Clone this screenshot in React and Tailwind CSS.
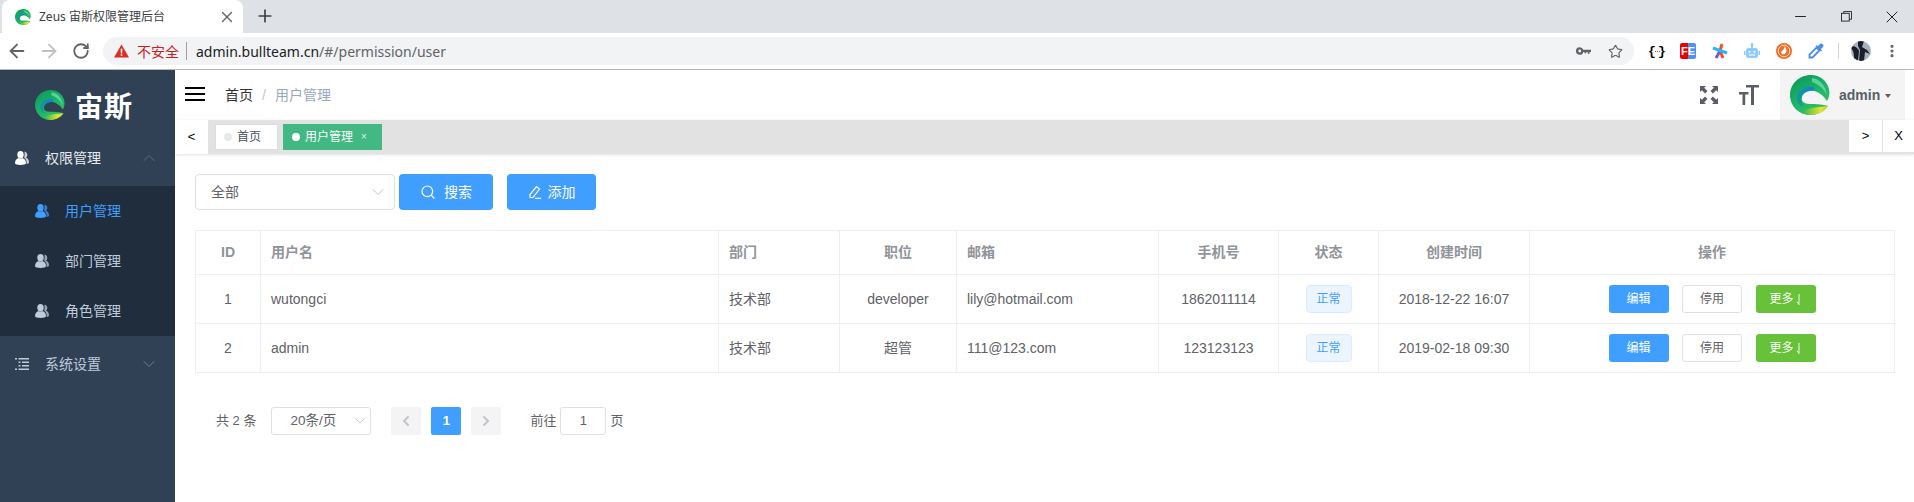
import { ArrowLeft, ArrowRight, RotateCw, Star, Search, ChevronDown, ChevronUp, ChevronLeft, ChevronRight, Plus, X, Minus, EllipsisVertical } from "lucide-react";

const cjk = "font-['Liberation_Sans','Noto_Sans_CJK_SC',sans-serif]";

function Logo({ size, id }) {
  return (
    <svg width={size} height={size} viewBox="0 0 40 40" className="shrink-0">
      <defs>
        <linearGradient id={id + "g"} x1="0.2" y1="0" x2="0.8" y2="1">
          <stop offset="0" stopColor="#0c9a5a" />
          <stop offset="0.55" stopColor="#1fb66b" />
          <stop offset="1" stopColor="#3cc25a" />
        </linearGradient>
        <linearGradient id={id + "y"} x1="0" y1="0" x2="1" y2="0">
          <stop offset="0" stopColor="#35b84f" />
          <stop offset="0.7" stopColor="#e6e22e" />
          <stop offset="1" stopColor="#b7dc3a" />
        </linearGradient>
        <linearGradient id={id + "b"} x1="0" y1="1" x2="1" y2="0">
          <stop offset="0" stopColor="#0f9d8a" />
          <stop offset="1" stopColor="#1a7fd6" />
        </linearGradient>
      </defs>
      <path d="M21 0C30 0 37 6 39 14C40 19 39 23 37 26C34 21 29 17 24 16C16 15 11 20 12 25C13 29 18 29 24 29C30 29 35 30 38 31C34 37 27 40 20 40C9 40 0 31 0 20C0 9 9 0 21 0Z" fill={`url(#${id}g)`} />
      <path d="M24 12C14 10 6 17 7 25C8 29 11 31 14 31C10 28 10 24 12 20C14 17 19 15 24 16Z" fill={`url(#${id}b)`} />
      <path d="M13 36C20 32 30 32 38 31C34 37 27 40 20 40C18 40 15 38 13 36Z" fill={`url(#${id}y)`} />
      <path d="M22 3C30 4 35 10 37 20C33 13 28 9 22 7Z" fill="#7fe8b0" opacity="0.65" />
    </svg>
  );
}

function Users({ className }) {
  return (
    <svg viewBox="0 0 14 14" className={className} fill="currentColor">
      <path d="M9.500 .5c1.800.3 2.800 1.700 2.800 3.300 0 1.300-.5 2.300-1.300 3 1.700.6 3 1.800 3 4.500 0 1-1 1.500-2.300 1.700.2-3-.7-5-2.500-6.300C9.700 4.700 9.800 2.500 9.500.5z" opacity="0.75" />
      <ellipse cx="5.500" cy="3.700" rx="3.200" ry="3.700" />
      <path d="M0 12.300C0 9.300 1.500 7.700 3.500 7c1.200.8 2.800.8 4 0 2 .7 3.500 2.300 3.500 5.300C11 14.500 0 14.500 0 12.300z" />
    </svg>
  );
}

function ListIcon({ className }) {
  return (
    <svg viewBox="0 0 14 14" className={className} fill="currentColor">
      <rect x="0" y="1" width="2" height="1.500" /><rect x="3.500" y="1" width="10.500" height="1.500" />
      <rect x="3.500" y="4.500" width="2" height="1.500" /><rect x="7" y="4.500" width="7" height="1.500" />
      <rect x="3.500" y="8" width="2" height="1.500" /><rect x="7" y="8" width="7" height="1.500" />
      <rect x="0" y="11.500" width="2" height="1.500" /><rect x="3.500" y="11.500" width="10.500" height="1.500" />
    </svg>
  );
}

function ChromeBar() {
  return (
    <div className="shrink-0">
      <div className="h-[33px] bg-[#dee1e6] flex items-end pl-[2px]">
        <div className="w-[241px] h-[33px] bg-white rounded-t-lg flex items-center pl-[13px] pr-[7px]">
          <Logo size={16} id="fav" />
          <span className="ml-[8px] text-[12px] text-[#3c4043] font-['Noto_Sans','Noto_Sans_CJK_SC',sans-serif] flex-1 whitespace-nowrap">Zeus 宙斯权限管理后台</span>
          <X className="w-[18px] h-[18px] text-[#5f6368]" strokeWidth={1.800} />
        </div>
        <Plus className="w-[20px] h-[20px] ml-[12px] mb-[7px] text-[#3c4043]" strokeWidth={2} />
        <div className="flex-1" />
        <div className="flex items-center h-[33px] text-[#222]">
          <Minus className="w-[17px] h-[17px] mr-[32px]" strokeWidth={1.400} />
          <svg viewBox="0 0 12 12" className="w-[11px] h-[11px] mr-[30px]" fill="none" stroke="currentColor" strokeWidth="1"><rect x="0.500" y="2.500" width="8.500" height="8.500" /><path d="M3 2.500V.5h8.500V9H9" /></svg>
          <X className="w-[20px] h-[20px] mr-[12px]" strokeWidth={1.200} />
        </div>
      </div>
      <div className="h-[36px] bg-white border-b border-[#b9b9b9] box-content flex items-center">
        <ArrowLeft className="w-[22px] h-[22px] ml-[6px] text-[#5f6368]" strokeWidth={2} />
        <ArrowRight className="w-[22px] h-[22px] ml-[10px] text-[#bdc1c6]" strokeWidth={2} />
        <RotateCw className="w-[18px] h-[18px] ml-[12px] text-[#5f6368]" strokeWidth={2.400} />
        <div className="ml-[13px] w-[1531px] h-[28px] rounded-full bg-[#f1f3f4] flex items-center pl-[11px] pr-[11px] font-['Noto_Sans','Noto_Sans_CJK_SC',sans-serif]">
          <svg viewBox="0 0 16 14" className="w-[15px] h-[14px]"><path d="M8 0l8 14H0z" fill="#d93025" /><rect x="7.200" y="4.500" width="1.600" height="5" fill="#fff" /><rect x="7.200" y="10.500" width="1.600" height="1.600" fill="#fff" /></svg>
          <span className="ml-[8px] text-[14px] text-[#c5221f]">不安全</span>
          <span className="ml-[7px] w-px h-[18px] bg-[#9aa0a6]" />
          <span className="ml-[9px] text-[14px] text-[#202124] whitespace-nowrap">admin.bullteam.cn<span className="text-[#5f6368]">/#/permission/user</span></span>
          <div className="flex-1" />
          <svg viewBox="0 0 16 8" className="w-[15px] h-[8px] mr-[17px]" fill="#5f6368"><path d="M4 0a4 4 0 0 1 3.800 2.700H16V5h-1.500v2h-2V5H11v1.500H9V5H7.800A4 4 0 1 1 4 0zm0 2.500a1.500 1.500 0 1 0 0 3 1.500 1.500 0 0 0 0-3z" /></svg>
          <Star className="w-[15px] h-[15px] text-[#5f6368]" strokeWidth={1.800} />
        </div>
        <div className="flex items-center ml-[16px]">
          <span className="w-[14px] flex items-center justify-between text-[13px] leading-none font-bold text-black font-['Liberation_Mono',monospace]">
            <span className="w-[4px] flex justify-center">{"{"}</span>
            <span className="w-[5px] border-t border-dotted border-[#e53935]" />
            <span className="w-[4px] flex justify-center">{"}"}</span>
          </span>
          <span className="ml-[16px] w-[16px] h-[16px] rounded-[2px] bg-[linear-gradient(90deg,#e00_50%,#4e8ef7_50%)] text-white text-[11px] leading-[16px] text-center font-bold font-['Liberation_Sans',sans-serif]">FE</span>
          <svg viewBox="0 0 16 16" className="ml-[16px] w-[16px] h-[16px]" strokeWidth="3"><path d="M10 1L8 8" stroke="#f4511e" /><path d="M8 8L11 15" stroke="#f4511e" /><path d="M8 8L4 15" stroke="#7e57c2" /><path d="M1 5l14 5" stroke="#29b6f6" /></svg>
          <svg viewBox="0 0 16 16" className="ml-[16px] w-[16px] h-[16px]" fill="#90caf9"><rect x="2" y="5" width="12" height="10" rx="2.500" /><rect x="0" y="8" width="1.500" height="4" /><rect x="14.500" y="8" width="1.500" height="4" /><rect x="7" y="1.500" width="2" height="4" /><circle cx="8" cy="1.500" r="1.500" /><circle cx="5.500" cy="9" r="1" fill="#fff" /><circle cx="10.500" cy="9" r="1" fill="#fff" /><rect x="5" y="11.500" width="6" height="1" fill="#fff" /></svg>
          <svg viewBox="0 0 16 16" className="ml-[16px] w-[16px] h-[16px]"><circle cx="8" cy="8" r="8" fill="#f26c21" /><circle cx="8" cy="8" r="5.800" fill="none" stroke="#fff" strokeWidth="0.800" /><path d="M9 3.500c1.500 2 2 4 1 6s-3.500 2.500-4.500 1 .5-2.500 1.500-3.500 1-2.500 2-3.500z" fill="#fff" /></svg>
          <svg viewBox="0 0 16 16" className="ml-[16px] w-[16px] h-[16px]"><path d="M8.500 4.500L11.500 7.500L4.500 14.500H1.500V11.500Z" fill="none" stroke="#4a8df0" strokeWidth="1.800" /><path d="M7.500 3L13 8.500l1-1-1.200-1.200L15 4c1.500-2-1-4.500-3-3L9.700 3.200 8.500 2z" fill="#4a8df0" /></svg>
          <span className="ml-[14px] w-px h-[16px] bg-[#d5d5d5]" />
          <svg viewBox="0 0 20 20" className="ml-[12px] w-[20px] h-[20px] rounded-full">
            <rect width="20" height="20" fill="#a9b2bf" />
            <path d="M0 6C3 4 7 7 8 10L7 20H3C3 14 3 9 0 8Z" fill="#1a1f28" />
            <path d="M7 0H13L11 6 16 9 19 13 14 11 13 20H8L9 9 7 5Z" fill="#1a1f28" />
          </svg>
          <EllipsisVertical className="ml-[13px] w-[16px] h-[16px] text-[#5f6368]" strokeWidth={2.800} />
        </div>
      </div>
    </div>
  );
}

function Sidebar() {
  const sub = [
    { name: "用户管理", active: true },
    { name: "部门管理" },
    { name: "角色管理" },
  ];
  return (
    <aside className="w-[175px] shrink-0 bg-[#304156]">
      <div className="h-[60px] flex items-start pt-[20px] pl-[35px]">
        <Logo size={30} id="side" />
        <span className="ml-[10px] text-[28px] leading-[30px] font-bold text-white tracking-[1px] font-['Noto_Sans_CJK_SC',sans-serif]">宙斯</span>
      </div>
      <div className="h-[56px] flex items-center pl-[15px] pr-[16px] text-[#e6eaf0]">
        <Users className="w-[14px] h-[14px] text-white" />
        <span className="ml-[16px] text-[14px] flex-1">权限管理</span>
        <ChevronUp className="w-[20px] h-[20px] text-[#5d6c80]" strokeWidth={1.200} />
      </div>
      <div className="bg-[#1f2d3d]">
        {sub.map((item) => (
          <div key={item.name} className={`h-[50px] flex items-center pl-[35px] ${item.active ? "text-[#409eff]" : "text-[#bfcbd9]"}`}>
            <Users className="w-[14px] h-[14px]" />
            <span className="ml-[16px] text-[14px]">{item.name}</span>
          </div>
        ))}
      </div>
      <div className="h-[56px] flex items-center pl-[15px] pr-[16px] text-[#bfcbd9]">
        <ListIcon className="w-[14px] h-[14px]" />
        <span className="ml-[16px] text-[14px] flex-1">系统设置</span>
        <ChevronDown className="w-[20px] h-[20px] text-[#6f7e92]" strokeWidth={1.200} />
      </div>
    </aside>
  );
}

function Navbar() {
  return (
    <div className="h-[50px] shrink-0 bg-white flex items-center">
      <div className="ml-[10px] w-[20px] flex flex-col gap-[4px] mt-[-2px]">
        <span className="h-[2px] bg-black" />
        <span className="h-[2px] bg-black" />
        <span className="h-[2px] bg-black" />
      </div>
      <span className="ml-[20px] text-[14px] text-[#303133]">首页</span>
      <span className="ml-[9px] text-[14px] text-[#c0c4cc]">/</span>
      <span className="ml-[9px] text-[14px] text-[#97a8be]">用户管理</span>
      <div className="flex-1" />
      <svg viewBox="0 0 18 18" className="w-[18px] h-[18px] text-[#5a5e66]" fill="currentColor">
        <path d="M0 0h6L4.200 1.800 7.500 5.100 5.100 7.500 1.800 4.200 0 6zM18 0v6l-1.800-1.800-3.300 3.300-2.400-2.400 3.300-3.300L12 0zM0 18v-6l1.800 1.800 3.300-3.300 2.400 2.400-3.300 3.300L6 18zM18 18h-6l1.800-1.800-3.300-3.300 2.400-2.400 3.300 3.300L18 12z" />
      </svg>
      <svg viewBox="0 0 20 20" className="ml-[21px] w-[20px] h-[20px] text-[#5a5e66]" fill="currentColor">
        <path d="M7 0h13v2.400h-5V20h-3V2.400H7zM0 7h9.500v2.400H6.200V20H3.500V9.400H0z" />
      </svg>
      <div className="ml-[21px] mr-[9px] w-[125px] h-[50px] bg-[#f4f4f4] flex items-center pl-[10px]">
        <Logo size={40} id="avatar" />
        <span className="ml-[9px] text-[14px] font-bold text-[#5a5e66]">admin</span>
        <span className="ml-[5px] mt-[1px] border-x-[3.500px] border-x-transparent border-t-[4px] border-t-[#5a5e66]" />
      </div>
    </div>
  );
}

function TagsBar() {
  return (
    <div className="h-[34px] shrink-0 bg-[#e2e2e2] shadow-[0_1px_3px_rgba(0,0,0,0.12)] flex items-stretch relative">
      <div className="w-[33px] bg-white flex items-center justify-center text-[13px] text-black">&lt;</div>
      <div className="ml-[7px] mt-[4px] w-[63px] h-[26px] bg-white border border-[#d8dce5] flex items-center pl-[8px] text-[12px] text-[#495060]">
        <span className="w-[8px] h-[8px] rounded-full bg-[#e8e8e8]" />
        <span className="ml-[5px]">首页</span>
      </div>
      <div className="ml-[5px] mt-[4px] w-[99px] h-[26px] bg-[#42b983] flex items-center pl-[9px] text-[12px] text-white">
        <span className="w-[8px] h-[8px] rounded-full bg-white" />
        <span className="ml-[5px]">用户管理</span>
        <span className="ml-[8px] text-[10px] leading-none text-[#d8f3e6]">×</span>
      </div>
      <div className="flex-1" />
      <div className="w-[33px] h-[32px] bg-white flex items-center justify-center text-[13px] text-black">&gt;</div>
      <div className="ml-px w-[31px] h-[32px] bg-white flex items-center justify-center text-[13px] text-black">X</div>
    </div>
  );
}

function Btn({ children, className }) {
  return <div className={`h-[28px] w-[60px] rounded-[3px] flex items-center justify-center text-[12px] ${className}`}>{children}</div>;
}

const rows = [
  { id: 1, name: "wutongci", dept: "技术部", job: "developer", mail: "lily@hotmail.com", phone: "1862011114", time: "2018-12-22 16:07" },
  { id: 2, name: "admin", dept: "技术部", job: "超管", mail: "111@123.com", phone: "123123123", time: "2019-02-18 09:30" },
];

const th = "h-[44px] border border-[#ebeef5] text-[14px] font-bold text-[#909399]";
const td = "h-[49px] border border-[#ebeef5] text-[14px] font-normal text-[#606266]";

function UserTable() {
  return (
    <table className="mt-[20px] w-[1699px] table-fixed border-collapse">
      <colgroup>
        <col className="w-[65px]" /><col className="w-[458px]" /><col className="w-[121px]" />
        <col className="w-[117px]" /><col className="w-[202px]" /><col className="w-[120px]" />
        <col className="w-[100px]" /><col className="w-[151px]" /><col className="w-[365px]" />
      </colgroup>
      <thead>
        <tr>
          <th className={`${th} text-center`}>ID</th>
          <th className={`${th} text-left pl-[10px]`}>用户名</th>
          <th className={`${th} text-left pl-[10px]`}>部门</th>
          <th className={`${th} text-center`}>职位</th>
          <th className={`${th} text-left pl-[10px]`}>邮箱</th>
          <th className={`${th} text-center`}>手机号</th>
          <th className={`${th} text-center`}>状态</th>
          <th className={`${th} text-center`}>创建时间</th>
          <th className={`${th} text-center`}>操作</th>
        </tr>
      </thead>
      <tbody>
        {rows.map((r) => (
          <tr key={r.id}>
            <td className={`${td} text-center`}>{r.id}</td>
            <td className={`${td} pl-[10px]`}>{r.name}</td>
            <td className={`${td} pl-[10px]`}>{r.dept}</td>
            <td className={`${td} text-center`}>{r.job}</td>
            <td className={`${td} pl-[10px]`}>{r.mail}</td>
            <td className={`${td} text-center`}>{r.phone}</td>
            <td className={`${td}`}>
              <div className="mx-auto w-[46px] h-[28px] rounded-[4px] border border-[#d9ecff] bg-[#ecf5ff] text-[#409eff] text-[12px] flex items-center justify-center">正常</div>
            </td>
            <td className={`${td} text-center`}>{r.time}</td>
            <td className={td}>
              <div className="flex justify-center gap-[13.5px]">
                <Btn className="bg-[#409eff] text-white">编辑</Btn>
                <Btn className="bg-white border border-[#dcdfe6] text-[#606266]">停用</Btn>
                <Btn className="bg-[#67c23a] text-white">
                  更多
                  <svg viewBox="0 0 6 14" className="ml-[2px] w-[6px] h-[13px]" fill="none" stroke="currentColor" strokeWidth="1"><path d="M3 1V12.500M.8 9.500L3 12.500" /></svg>
                </Btn>
              </div>
            </td>
          </tr>
        ))}
      </tbody>
    </table>
  );
}

function Pagination() {
  return (
    <div className="mt-[34px] ml-[21px] h-[28px] flex items-center text-[13px] text-[#606266]">
      <span>共 2 条</span>
      <div className="ml-[15px] w-[100px] h-[28px] rounded-[3px] border border-[#dcdfe6] flex items-center pl-[18px] pr-[2px]">
        <span className="flex-1 text-[13.500px]">20条/页</span>
        <ChevronDown className="w-[16px] h-[16px] text-[#c0c4cc]" strokeWidth={1.300} />
      </div>
      <div className="ml-[20px] w-[30px] h-[28px] rounded-[2px] bg-[#f4f4f5] flex items-center justify-center text-[#c0c4cc]"><ChevronLeft className="w-[16px] h-[16px]" strokeWidth={3} /></div>
      <div className="ml-[10px] w-[30px] h-[28px] rounded-[2px] bg-[#409eff] flex items-center justify-center text-white font-bold">1</div>
      <div className="ml-[10px] w-[30px] h-[28px] rounded-[2px] bg-[#f4f4f5] flex items-center justify-center text-[#c0c4cc]"><ChevronRight className="w-[16px] h-[16px]" strokeWidth={3} /></div>
      <span className="ml-[29px]">前往</span>
      <div className="ml-[4px] w-[46px] h-[28px] rounded-[3px] border border-[#dcdfe6] flex items-center justify-center">1</div>
      <span className="ml-[4px]">页</span>
    </div>
  );
}

export default function App() {
  return (
    <div className={`h-[502px] w-[1914px] overflow-hidden flex flex-col bg-white ${cjk}`}>
      <ChromeBar />
      <div className="flex-1 flex min-h-0">
        <Sidebar />
        <div className="flex-1 min-w-0 flex flex-col">
          <Navbar />
          <TagsBar />
          <div className="pt-[20px] pl-[20px]">
            <div className="flex items-center">
              <div className="w-[200px] h-[36px] rounded-[4px] border border-[#dcdfe6] flex items-center pl-[15px] pr-[6px] text-[14px] text-[#606266]">
                <span className="flex-1">全部</span>
                <ChevronDown className="w-[20px] h-[20px] text-[#c0c4cc]" strokeWidth={1.200} />
              </div>
              <div className="ml-[4px] w-[94px] h-[36px] rounded-[4px] bg-[#409eff] text-white text-[14px] flex items-center justify-center">
                <Search className="w-[16px] h-[16px]" strokeWidth={1.800} />
                <span className="ml-[8px]">搜索</span>
              </div>
              <div className="ml-[14px] w-[89px] h-[36px] rounded-[4px] bg-[#409eff] text-white text-[14px] flex items-center justify-center">
                <svg viewBox="0 0 14 14" className="w-[14px] h-[14px]" fill="none" stroke="currentColor" strokeWidth="1.200"><path d="M2 12.500V9.500L8.500 1.500L11.500 4L5 12.500ZM7 13.400h6" /></svg>
                <span className="ml-[6px]">添加</span>
              </div>
            </div>
            <UserTable />
            <Pagination />
          </div>
        </div>
      </div>
    </div>
  );
}
